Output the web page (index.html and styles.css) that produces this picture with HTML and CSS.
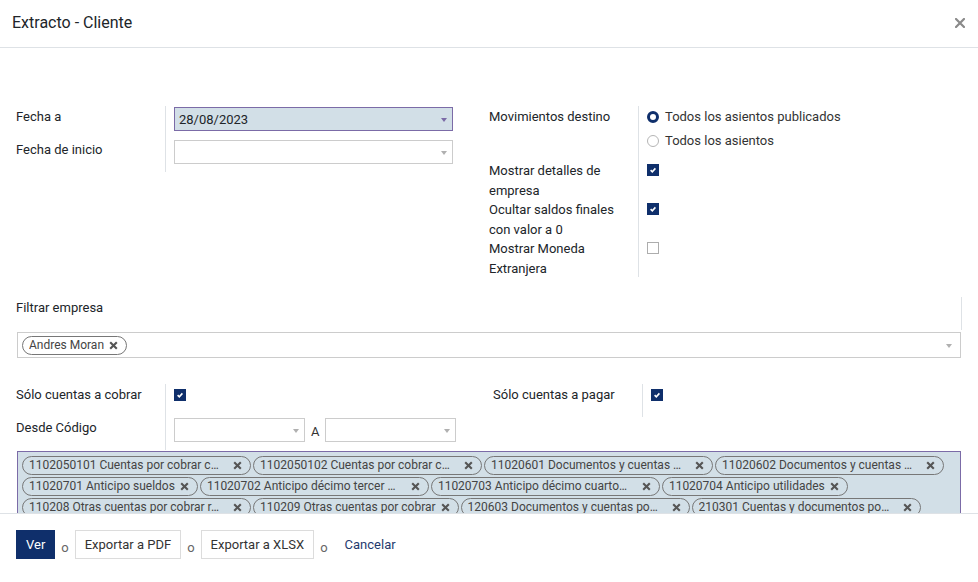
FILE: index.html
```html
<!DOCTYPE html>
<html lang="es">
<head>
<meta charset="utf-8">
<title>Extracto - Cliente</title>
<link rel="stylesheet" href="styles.css">
</head>
<body>
<div class="modal">
  <header class="modal-header">
    <h4 class="modal-title">Extracto - Cliente</h4>
    <button class="close" aria-label="Cerrar">
      <svg width="10" height="10" viewBox="0 0 10 10"><path d="M1 1L9 9M9 1L1 9" stroke="#8a8a8a" stroke-width="2.2" stroke-linecap="square"/></svg>
    </button>
  </header>

  <div class="modal-body">
    <div class="groups">
      <div class="group group-left">
        <div class="lbl">Fecha a</div>
        <div class="fld fld-input"><div class="select focus">28/08/2023</div></div>
        <div class="lbl">Fecha de inicio</div>
        <div class="fld fld-input"><div class="select"></div></div>
      </div>
      <div class="group group-right">
        <div class="lbl">Movimientos destino</div>
        <div class="fld radios">
          <div class="radio-item"><span class="radio on"></span>Todos los asientos publicados</div>
          <div class="radio-item"><span class="radio"></span>Todos los asientos</div>
        </div>
        <div class="lbl">Mostrar detalles de empresa</div>
        <div class="fld"><span class="check on"><svg width="12" height="12" viewBox="0 0 12 12"><path d="M3.6 6.2L5.3 7.8L8.4 4.4" fill="none" stroke="#fff" stroke-width="1.6"/></svg></span></div>
        <div class="lbl">Ocultar saldos finales con valor a 0</div>
        <div class="fld"><span class="check on"><svg width="12" height="12" viewBox="0 0 12 12"><path d="M3.6 6.2L5.3 7.8L8.4 4.4" fill="none" stroke="#fff" stroke-width="1.6"/></svg></span></div>
        <div class="lbl">Mostrar Moneda Extranjera</div>
        <div class="fld"><span class="check"></span></div>
      </div>
    </div>

    <div class="full-row">
      <div class="lbl">Filtrar empresa</div>
      <div class="fld-empty"></div>
    </div>
    <div class="tagfield">
      <span class="tag"><span class="tag-text">Andres Moran</span><span class="tag-x"><svg width="9" height="9" viewBox="0 0 9 9"><path d="M1.2 1.2L7.8 7.8M7.8 1.2L1.2 7.8" stroke="#555" stroke-width="2.1"/></svg></span></span>
      <span class="caret"></span>
    </div>

    <div class="groups groups-b">
      <div class="group group-left">
        <div class="lbl">Sólo cuentas a cobrar</div>
        <div class="fld fld-input"><span class="check on"><svg width="12" height="12" viewBox="0 0 12 12"><path d="M3.6 6.2L5.3 7.8L8.4 4.4" fill="none" stroke="#fff" stroke-width="1.6"/></svg></span></div>
        <div class="lbl">Desde Código</div>
        <div class="fld fld-input range">
          <div class="select small"></div>
          <span class="range-a">A</span>
          <div class="select small"></div>
        </div>
      </div>
      <div class="group group-right">
        <div class="lbl">Sólo cuentas a pagar</div>
        <div class="fld fld-input"><span class="check on"><svg width="12" height="12" viewBox="0 0 12 12"><path d="M3.6 6.2L5.3 7.8L8.4 4.4" fill="none" stroke="#fff" stroke-width="1.6"/></svg></span></div>
      </div>
    </div>

    <div class="tagfield required">
      <span class="tag"><span class="tag-text trunc">1102050101 Cuentas por cobrar c…</span><span class="tag-x"><svg width="9" height="9" viewBox="0 0 9 9"><path d="M1.2 1.2L7.8 7.8M7.8 1.2L1.2 7.8" stroke="#555" stroke-width="2.1"/></svg></span></span>
      <span class="tag"><span class="tag-text trunc">1102050102 Cuentas por cobrar c…</span><span class="tag-x"><svg width="9" height="9" viewBox="0 0 9 9"><path d="M1.2 1.2L7.8 7.8M7.8 1.2L1.2 7.8" stroke="#555" stroke-width="2.1"/></svg></span></span>
      <span class="tag"><span class="tag-text trunc">11020601 Documentos y cuentas …</span><span class="tag-x"><svg width="9" height="9" viewBox="0 0 9 9"><path d="M1.2 1.2L7.8 7.8M7.8 1.2L1.2 7.8" stroke="#555" stroke-width="2.1"/></svg></span></span>
      <span class="tag"><span class="tag-text trunc">11020602 Documentos y cuentas …</span><span class="tag-x"><svg width="9" height="9" viewBox="0 0 9 9"><path d="M1.2 1.2L7.8 7.8M7.8 1.2L1.2 7.8" stroke="#555" stroke-width="2.1"/></svg></span></span>
      <span class="tag"><span class="tag-text">11020701 Anticipo sueldos</span><span class="tag-x"><svg width="9" height="9" viewBox="0 0 9 9"><path d="M1.2 1.2L7.8 7.8M7.8 1.2L1.2 7.8" stroke="#555" stroke-width="2.1"/></svg></span></span>
      <span class="tag"><span class="tag-text trunc">11020702 Anticipo décimo tercer …</span><span class="tag-x"><svg width="9" height="9" viewBox="0 0 9 9"><path d="M1.2 1.2L7.8 7.8M7.8 1.2L1.2 7.8" stroke="#555" stroke-width="2.1"/></svg></span></span>
      <span class="tag"><span class="tag-text trunc">11020703 Anticipo décimo cuarto…</span><span class="tag-x"><svg width="9" height="9" viewBox="0 0 9 9"><path d="M1.2 1.2L7.8 7.8M7.8 1.2L1.2 7.8" stroke="#555" stroke-width="2.1"/></svg></span></span>
      <span class="tag"><span class="tag-text">11020704 Anticipo utilidades</span><span class="tag-x"><svg width="9" height="9" viewBox="0 0 9 9"><path d="M1.2 1.2L7.8 7.8M7.8 1.2L1.2 7.8" stroke="#555" stroke-width="2.1"/></svg></span></span>
      <span class="tag"><span class="tag-text trunc">110208 Otras cuentas por cobrar r…</span><span class="tag-x"><svg width="9" height="9" viewBox="0 0 9 9"><path d="M1.2 1.2L7.8 7.8M7.8 1.2L1.2 7.8" stroke="#555" stroke-width="2.1"/></svg></span></span>
      <span class="tag"><span class="tag-text">110209 Otras cuentas por cobrar</span><span class="tag-x"><svg width="9" height="9" viewBox="0 0 9 9"><path d="M1.2 1.2L7.8 7.8M7.8 1.2L1.2 7.8" stroke="#555" stroke-width="2.1"/></svg></span></span>
      <span class="tag"><span class="tag-text trunc">120603 Documentos y cuentas po…</span><span class="tag-x"><svg width="9" height="9" viewBox="0 0 9 9"><path d="M1.2 1.2L7.8 7.8M7.8 1.2L1.2 7.8" stroke="#555" stroke-width="2.1"/></svg></span></span>
      <span class="tag"><span class="tag-text trunc">210301 Cuentas y documentos po…</span><span class="tag-x"><svg width="9" height="9" viewBox="0 0 9 9"><path d="M1.2 1.2L7.8 7.8M7.8 1.2L1.2 7.8" stroke="#555" stroke-width="2.1"/></svg></span></span>
    </div>
  </div>

  <footer class="modal-footer">
    <button class="btn btn-primary">Ver</button>
    <span class="or">o</span>
    <button class="btn btn-secondary">Exportar a PDF</button>
    <span class="or">o</span>
    <button class="btn btn-secondary">Exportar a XLSX</button>
    <span class="or">o</span>
    <button class="btn btn-link">Cancelar</button>
  </footer>
</div>
</body>
</html>
```

FILE: styles.css
```css
* { box-sizing: border-box; }

html, body {
  margin: 0;
  padding: 0;
  background: #fff;
}

body {
  font-family: Roboto, "Liberation Sans", Arial, sans-serif;
  font-size: 13px;
  line-height: 19.5px;
  color: #212529;
}

.modal {
  width: 978px;
  height: 582px;
  display: flex;
  flex-direction: column;
  overflow: hidden;
}

.modal-header {
  height: 48px;
  flex: none;
  display: flex;
  align-items: center;
  justify-content: space-between;
  padding: 0 13px 0 12px;
  border-bottom: 1px solid #dee2e6;
}

.modal-title {
  margin: 0;
  font-size: 16px;
  font-weight: 400;
  color: #212529;
  line-height: 20px;
  padding-bottom: 1px;
}

.close {
  border: 0;
  background: transparent;
  padding: 0;
  width: 10px;
  height: 10px;
  display: flex;
  margin-bottom: 1px;
}

.modal-body {
  height: 465px;
  flex: none;
  overflow: hidden;
  padding: 58px 16px 0 16px;
}

/* groups */
.groups {
  display: grid;
  grid-template-columns: 473px 473px;
  align-items: start;
}

.groups-b {
  grid-template-columns: 477px 1fr;
  margin-top: 26px;
}

.group {
  display: grid;
  grid-template-columns: 149px 1fr;
}

.lbl {
  padding: 1px 8px 0 0;
  margin-bottom: -1px;
  color: #212529;
}

.fld {
  border-left: 1px solid #dee2e6;
  padding-left: 8px;
}

.fld-input {
  height: 33px;
  padding-top: 1px;
}

.group-right .fld {
  min-height: 39px;
}

.groups-b .group-right .fld {
  min-height: 0;
}

/* selects */
.select {
  position: relative;
  width: 279px;
  height: 24px;
  border: 1px solid #ccc;
  background: #fff;
  padding: 1px 4px;
  line-height: 21px;
  color: #212529;
}

.select::after {
  content: "";
  position: absolute;
  right: 5px;
  top: 10px;
  border-left: 3.5px solid transparent;
  border-right: 3.5px solid transparent;
  border-top: 4px solid #b0b0b0;
}

.select.focus {
  background: #d2dfe7;
  border-color: #7b6ba7;
}

.select.focus::after {
  border-top-color: #7b6ba7;
}

.select.small {
  width: 131px;
}

.range {
  display: flex;
  align-items: flex-start;
  gap: 6px;
}

.range-a {
  line-height: 24px;
  padding-top: 2px;
  color: #333;
}

/* radios */
.radios {
  padding-bottom: 6px;
}

.radio-item {
  height: 24px;
  padding-top: 1px;
  display: flex;
  align-items: flex-start;
  gap: 6px;
  color: #333;
}

.radio {
  width: 12px;
  height: 12px;
  margin-top: 3.5px;
  border-radius: 50%;
  border: 1px solid #b5b5b5;
  background: #fff;
  flex: none;
}

.radio.on {
  border: 3.5px solid #0f2f6b;
}

/* checkboxes */
.check {
  display: block;
  width: 12px;
  height: 12px;
  margin-top: 4px;
  border: 1px solid #adadad;
  background: #fff;
}

.check.on {
  border: 0;
  background: #0f2f6b;
}

.check svg {
  display: block;
}

/* full row */
.full-row {
  margin-top: 20px;
  display: grid;
  grid-template-columns: 1fr 1px;
  height: 33px;
}

.fld-empty {
  border-left: 1px solid #dee2e6;
}

/* tag fields */
.tagfield {
  position: relative;
  margin: 2px 0 0 1px;
  width: 944px;
  min-height: 26px;
  border: 1px solid #ccc;
  padding: 3px 20px 0 4px;
  display: flex;
  flex-wrap: wrap;
  align-content: flex-start;
  background: #fff;
}

.tagfield .caret {
  position: absolute;
  right: 8px;
  top: 11px;
  border-left: 3.5px solid transparent;
  border-right: 3.5px solid transparent;
  border-top: 4px solid #b0b0b0;
}

.tagfield.required {
  margin-top: 1px;
  background: #d2dfe7;
  border-color: #7b6ba7;
  padding: 4px 4px 0 4px;
  min-height: 80px;
}

.tag {
  display: inline-flex;
  align-items: center;
  height: 19px;
  border: 1px solid #777;
  border-radius: 10px;
  padding: 0 8px 0 6px;
  margin: 0 2px 2px 0;
  font-size: 12px;
  line-height: 17px;
  color: #444;
  background: transparent;
  white-space: nowrap;
}

.tag-text {
  display: inline-block;
  overflow: hidden;
  text-overflow: ellipsis;
}

.tag-text.trunc {
  width: 199px;
}

.tag-x {
  display: inline-flex;
  margin-left: 5px;
}

/* footer */
.modal-footer {
  flex: 1;
  border-top: 1px solid #dee2e6;
  padding: 16px 16px 0 16px;
  display: flex;
  align-items: flex-start;
}

.btn {
  font-family: inherit;
  font-size: 13px;
  line-height: 19.5px;
  height: 29px;
  padding: 4px 9px;
  border: 1px solid transparent;
  border-radius: 0;
  cursor: pointer;
}

.btn-primary {
  background: #0f2f6b;
  color: #fff;
  border-color: #0f2f6b;
}

.btn-secondary {
  background: #fff;
  color: #333;
  border-color: #dcdcdc;
}

.btn-link {
  background: transparent;
  color: #1f3a6e;
  padding: 4px 10px;
}

.or {
  color: #666;
  margin: 0 6px 0 6px;
  line-height: 19.5px;
  padding-top: 8px;
}
```
